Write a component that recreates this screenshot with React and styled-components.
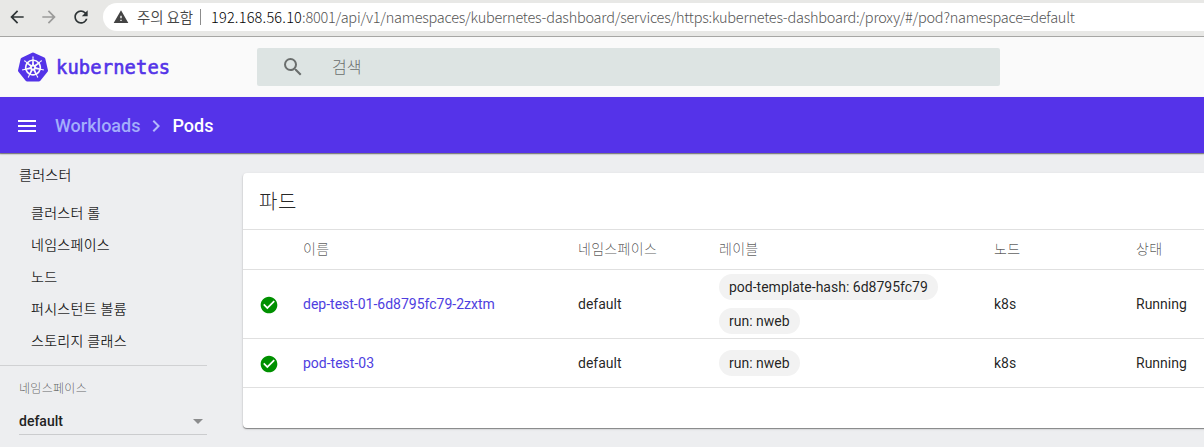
import React from "react";
import styled, { createGlobalStyle } from "styled-components";
import {
  MdArrowBack, MdArrowForward, MdRefresh, MdWarning, MdSearch, MdMenu,
  MdChevronRight, MdCheckCircle, MdArrowDropDown,
} from "react-icons/md";
import { SiKubernetes } from "react-icons/si";

const Global = createGlobalStyle`
  * { box-sizing: border-box; }
  body {
    margin: 0;
    overflow: hidden;
    background: #edeef0;
    color: rgba(0, 0, 0, 0.87);
    font: 14px/20px Roboto, "Noto Sans CJK KR", sans-serif;
  }
  svg { display: block; flex: none; }
`;

const Page = styled.div`
  display: flex;
  flex-direction: column;
  height: 447px;
  overflow: hidden;
`;

const BrowserBar = styled.div`
  display: flex;
  align-items: center;
  height: 37px;
  padding: 0 0 2px 7px;
  background: #e8e8e6;
  border-bottom: 1px solid #a6a6a4;
`;

const NavIcon = styled.div`
  width: 32px;
  color: ${(p) => (p.$muted ? "#9b9b9a" : "#2e3436")};
`;

const AddressBar = styled.div`
  display: flex;
  align-items: center;
  flex: 1;
  height: 28px;
  padding-left: 10px;
  border-radius: 14px 0 0 14px;
  background: #fff;
  color: #444;
  white-space: nowrap;
`;

const Warn = styled.span`
  margin-left: 8px;
  width: 59px;
  font: 350 14.5px/20px "Noto Sans CJK KR", sans-serif;
  letter-spacing: -0.1px;
`;

const Divider = styled.span`
  width: 1px;
  height: 16px;
  margin: 0 10px 0 4px;
  background: #8c8c8c;
`;

const Url = styled.span`
  font: 300 14.5px/20px "Noto Sans CJK KR", sans-serif;
  letter-spacing: ${(p) => (p.$host ? "0.2px" : "-0.235px")};
  color: ${(p) => (p.$host ? "#000" : "#555")};
`;

const Header = styled.header`
  display: flex;
  align-items: center;
  height: 60px;
  padding-left: 18px;
  background: #fafafa;
`;

const Brand = styled.div`
  display: flex;
  align-items: center;
  width: 239px;
  color: #5333e8;
`;

const BrandName = styled.span`
  margin-left: 8px;
  padding-top: 2px;
  font: 18.8px/24px "DejaVu Sans Mono", monospace;
  letter-spacing: 0.12px;
  -webkit-text-stroke: 0.6px #5333e8;
`;

const SearchBox = styled.div`
  display: flex;
  align-items: center;
  width: 743px;
  height: 38px;
  padding-left: 24px;
  border-radius: 2px;
  background: #dde4e3;
  color: #6a6e6d;
`;

const SearchText = styled.span`
  margin-left: 27px;
  padding-bottom: 2px;
  font: 300 16px/24px "Noto Sans CJK KR", sans-serif;
`;

const Toolbar = styled.nav`
  position: relative;
  display: flex;
  align-items: center;
  flex: none;
  height: 56px;
  padding: 2px 0 0 15px;
  background: #5533e9;
  color: #fff;
  box-shadow: 0 1px 1px rgba(0, 0, 0, 0.38), 0 1px 2px rgba(0, 0, 0, 0.2);
  font-size: 18px;
  font-weight: 500;
`;

const Crumb = styled.span`
  color: ${(p) => (p.$current ? "#fff" : "#a3adfb")};
`;

const MenuButton = styled.div`
  width: 40px;
`;

const CrumbArrow = styled.div`
  margin: 0 4px;
  color: #b3b8fb;
`;

const Body = styled.div`
  display: flex;
  flex: 1;
`;

const Sidebar = styled.aside`
  width: 207px;
  flex: none;
  padding-top: 12px;
`;

const SideHeading = styled.div`
  height: 32px;
  padding-left: 19px;
  line-height: 20px;
  font-weight: 350;
  letter-spacing: 0.3px;
`;

const SideItem = styled.div`
  height: 32px;
  padding-left: 31px;
  line-height: 32px;
  font-weight: 350;
  letter-spacing: 0.28px;
`;

const Selector = styled.div`
  padding-top: 13px;
  border-top: 1px solid #d0d1d3;
  margin-top: 8px;
`;

const SelectorLabel = styled.div`
  padding-left: 19px;
  font-size: 12px;
  font-weight: 300;
  line-height: 21px;
  letter-spacing: 0.3px;
  color: rgba(0, 0, 0, 0.6);
`;

const SelectField = styled.div`
  display: flex;
  justify-content: space-between;
  align-items: center;
  height: 27px;
  margin: 8px 0 0 19px;
  border-bottom: 1px solid #cbccce;
  font-weight: 500;
  color: #222;

  svg { margin-right: -3px; color: #8b8c8d; }
`;

const Main = styled.main`
  flex: 1;
  min-width: 0;
  padding: 20px 0 0 36px;
`;

const Card = styled.section`
  width: 1000px;
  height: 255px;
  border-radius: 4px;
  background: #fff;
  box-shadow: 0 1px 1px rgba(0, 0, 0, 0.4), 0 1px 3px rgba(0, 0, 0, 0.12);
`;

const CardTitle = styled.h2`
  height: 56px;
  margin: 0;
  padding-left: 16px;
  font-size: 20px;
  font-weight: 300;
  line-height: 58px;
  letter-spacing: 0.5px;
`;

const Row = styled.div`
  display: grid;
  grid-template-columns: 44px 275px 141px 275px 142px 1fr;
  align-items: center;
  height: ${(p) => p.$height}px;
  padding-left: 16px;
  border-top: 1px solid #e0e0e0;
  border-bottom: ${(p) => (p.$last ? "1px solid #e0e0e0" : "none")};
`;

const HeadCell = styled.div`
  padding-bottom: 1px;
  font-weight: 300;
  letter-spacing: 0.3px;
  color: rgba(0, 0, 0, 0.66);
`;

const Status = styled.div`
  padding-top: 2px;
  color: #009000;
`;

const PodLink = styled.div`
  color: #4e3ee0;
`;

const Labels = styled.div`
  display: flex;
  flex-direction: column;
  align-items: flex-start;
  gap: 8px;
`;

const Chip = styled.span`
  height: 26px;
  padding: 0 10px;
  border-radius: 13px;
  background: #f2f2f2;
  line-height: 26px;
`;

const clusterItems = ["클러스터 롤", "네임스페이스", "노드", "퍼시스턴트 볼륨", "스토리지 클래스"];

const pods = [
  { name: "dep-test-01-6d8795fc79-2zxtm", labels: ["pod-template-hash: 6d8795fc79", "run: nweb"], height: 69 },
  { name: "pod-test-03", labels: ["run: nweb"], height: 50 },
];

export default function App() {
  return (
    <Page>
      <Global />
      <BrowserBar>
        <NavIcon><MdArrowBack size={20} /></NavIcon>
        <NavIcon $muted><MdArrowForward size={20} /></NavIcon>
        <NavIcon><MdRefresh size={20} /></NavIcon>
        <AddressBar>
          <MdWarning size={16} color="#444" />
          <Warn>주의 요함</Warn>
          <Divider />
          <Url $host>192.168.56.10</Url>
          <Url>:8001/api/v1/namespaces/kubernetes-dashboard/services/https:kubernetes-dashboard:/proxy/#/pod?namespace=default</Url>
        </AddressBar>
      </BrowserBar>
      <Header>
        <Brand>
          <SiKubernetes size={30} />
          <BrandName>kubernetes</BrandName>
        </Brand>
        <SearchBox>
          <MdSearch size={24} />
          <SearchText>검색</SearchText>
        </SearchBox>
      </Header>
      <Toolbar>
        <MenuButton><MdMenu size={24} /></MenuButton>
        <Crumb>Workloads</Crumb>
        <CrumbArrow><MdChevronRight size={24} /></CrumbArrow>
        <Crumb $current>Pods</Crumb>
      </Toolbar>
      <Body>
        <Sidebar>
          <SideHeading>클러스터</SideHeading>
          {clusterItems.map((item) => <SideItem key={item}>{item}</SideItem>)}
          <Selector>
            <SelectorLabel>네임스페이스</SelectorLabel>
            <SelectField>default<MdArrowDropDown size={24} /></SelectField>
          </Selector>
        </Sidebar>
        <Main>
          <Card>
            <CardTitle>파드</CardTitle>
            <Row $height={40}>
              <span />
              {["이름", "네임스페이스", "레이블", "노드", "상태"].map((h) => <HeadCell key={h}>{h}</HeadCell>)}
            </Row>
            {pods.map((pod, i) => (
              <Row key={pod.name} $height={pod.height} $last={i === pods.length - 1}>
                <Status><MdCheckCircle size={20} /></Status>
                <PodLink>{pod.name}</PodLink>
                <span>default</span>
                <Labels>{pod.labels.map((l) => <Chip key={l}>{l}</Chip>)}</Labels>
                <span>k8s</span>
                <span>Running</span>
              </Row>
            ))}
          </Card>
        </Main>
      </Body>
    </Page>
  );
}
